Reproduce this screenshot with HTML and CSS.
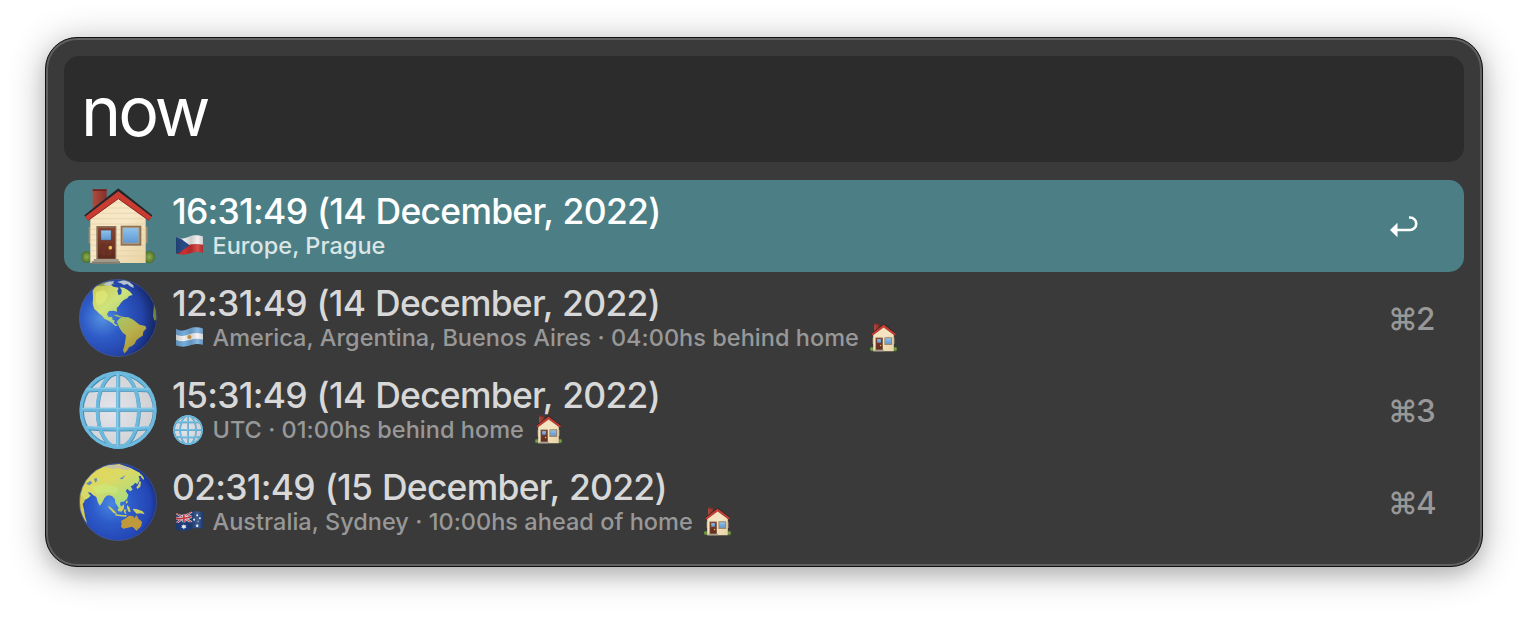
FILE: index.html
```html
<!DOCTYPE html>
<html lang="en">
<head>
<meta charset="utf-8">
<title>now</title>
<link rel="stylesheet" href="styles.css">
</head>
<body>
<svg class="defs" width="0" height="0" aria-hidden="true">
  <defs>
    <linearGradient id="wall" x1="0" y1="0" x2="1" y2="1"><stop offset="0" stop-color="#f6e4bd"/><stop offset=".5" stop-color="#f7e8c8"/><stop offset="1" stop-color="#ead3a4"/></linearGradient>
    <linearGradient id="glass" x1="0" y1="0" x2="0" y2="1"><stop offset="0" stop-color="#8fc4ee"/><stop offset="1" stop-color="#5f97d2"/></linearGradient>
    <linearGradient id="door" x1="0" y1="0" x2="0" y2="1"><stop offset="0" stop-color="#874532"/><stop offset="1" stop-color="#5d2a1e"/></linearGradient>
    <linearGradient id="brick" x1="0" y1="0" x2="1" y2="0"><stop offset="0" stop-color="#b04a3d"/><stop offset="1" stop-color="#84302b"/></linearGradient>
    <radialGradient id="bush"><stop offset="0" stop-color="#8fae4e"/><stop offset="1" stop-color="#4c6e2d"/></radialGradient>
    <radialGradient id="sea" cx=".3" cy=".5" r=".72"><stop offset="0" stop-color="#5590e0"/><stop offset=".35" stop-color="#2f5cc8"/><stop offset=".72" stop-color="#2343a8"/><stop offset="1" stop-color="#111f55"/></radialGradient>
    <radialGradient id="sea2" cx=".42" cy=".52" r=".64"><stop offset="0" stop-color="#4a86e2"/><stop offset=".4" stop-color="#2d5bc9"/><stop offset=".78" stop-color="#2345b4"/><stop offset="1" stop-color="#12235f"/></radialGradient>
    <linearGradient id="land" x1="0" y1="0" x2=".8" y2="1"><stop offset="0" stop-color="#c9c450"/><stop offset=".5" stop-color="#cfe37c"/><stop offset="1" stop-color="#a3c674"/></linearGradient>
    <linearGradient id="south" x1="0" y1="0" x2=".6" y2="1"><stop offset="0" stop-color="#a4c869"/><stop offset=".5" stop-color="#b9b04e"/><stop offset="1" stop-color="#aa9236"/></linearGradient>
    <linearGradient id="asia" x1="0" y1="0" x2=".7" y2="1"><stop offset="0" stop-color="#e8d552"/><stop offset=".5" stop-color="#d9da66"/><stop offset="1" stop-color="#9fdc86"/></linearGradient>
    <radialGradient id="pale" cx=".42" cy=".5" r=".6"><stop offset="0" stop-color="#e2e5ec"/><stop offset="1" stop-color="#cfcfd2"/></radialGradient>
    <linearGradient id="ripple" x1="0" y1="0" x2="1" y2="0"><stop offset="0" stop-color="#000" stop-opacity=".18"/><stop offset=".3" stop-color="#000" stop-opacity="0"/><stop offset=".55" stop-color="#000" stop-opacity=".14"/><stop offset=".8" stop-color="#fff" stop-opacity=".15"/><stop offset="1" stop-color="#000" stop-opacity=".14"/></linearGradient>
    <clipPath id="disc"><circle cx="174" cy="138" r="116"/></clipPath>
    <clipPath id="wave"><path d="M0 5C13 13 23 11 38 5C53-1 66 0 79 4V52C65 48 55 49 40 54C25 59 13 58 0 53Z"/></clipPath>

    <symbol id="house" viewBox="57 36 234 234">
      <path d="M98 43h42v38l-42 34z" fill="url(#brick)"/><path d="M98 43h42v5H98z" fill="#6f211f"/>
      <ellipse cx="80" cy="246" rx="17" ry="18" fill="url(#bush)"/><ellipse cx="268" cy="246" rx="17" ry="19" fill="url(#bush)"/>
      <path d="M86 155h8v50h-8zM255 155h8v50h-8z" fill="#a08a70"/>
      <path d="M91 126 175 62 257 126V264H91Z" fill="url(#wall)"/>
      <path d="M148 83h52M126 99h98M105 115h138M91 131h166M91 147h166M91 163h166M91 179h166M91 195h166M91 211h166M91 227h166M91 243h166" stroke="#e2cfa4" stroke-width="2"/>
      <path d="M73 121 175 40 277 121 268 136 175 64 83 136Z" fill="#232628"/>
      <path d="M75 125 175 49 275 125 267 137 175 71 84 137Z" fill="#c83c32"/>
      <path d="M86 135 175 71 265 135" fill="none" stroke="#8f2825" stroke-width="3"/>
      <path d="M109 153h60v100h-60z" fill="#8a7158"/><path d="M114 158h51v93h-51z" fill="url(#door)"/>
      <path d="M122 165h32v31h-32z" fill="url(#glass)" stroke="#623024" stroke-width="2"/>
      <path d="M124 205h12v35h-12zM143 205h12v35h-12z" fill="#6b3225"/><circle cx="151" cy="218" r="5.500" fill="#edc253"/>
      <path d="M101 252h75v7h-75z" fill="#a39b89"/><path d="M95 259h85v8H95z" fill="#837e73"/>
      <path d="M182 152h62v60h-62z" fill="#8c7358"/><path d="M188 158h49v47h-49z" fill="url(#glass)" stroke="#b39a77" stroke-width="3"/>
    </symbol>

    <symbol id="americas" viewBox="57 21 234 234">
      <circle cx="174" cy="138" r="117" fill="url(#sea)"/>
      <g clip-path="url(#disc)">
        <path d="M98 57 106 43 119 36 137 34 151 37 160 44 176 47 172 58 176 70 184 66 185 54 179 46 191 47 202 53 211 60 218 69 207 72 202 79 191 84 183 92 177 101 170 109 171 119 161 116 147 117 141 126 145 135 153 134 158 139 157 144 164 145 162 153 170 158 174 161 166 162 155 152 143 145 133 140 127 132 119 126 110 117 103 111 98 96 99 78Z" fill="url(#land)"/>
        <path d="M104 43c14-9 27-13 46-15l14 8-18 3-22 3z" fill="#8c9b52"/>
        <path d="M129 38 144 30 163 27 158 34 149 42zM171 30 192 24 207 29 220 40 221 48 210 43 202 36 191 39 183 34z" fill="#b6c2cd"/>
        <path d="m160 128 13 0 8 5 10 1-3 4-11-2-12-4z" fill="#9dbb64"/>
        <path d="m170 149 9-10 10-4 16 1 15 7 9 8 10 7 17 4 3 7-9 10-2 12-11 7-8 7-5 10-7 6-10 5-5 9-5 6-4 3-4-9 4-13 3-17 2-15-11-9-8-12z" fill="url(#south)"/>
        <path d="m282 96 6 4 2 42-7 4-4-14z" fill="#77843c"/>
        <path d="m108 60 24-6 12 14-10 22-20 12-8-18z" fill="#e7ef7b" opacity=".55"/>
      </g>
      <circle cx="174" cy="138" r="115.500" fill="none" stroke="#525a73" stroke-width="3" opacity=".65"/>
    </symbol>

    <symbol id="eastern" viewBox="57 21 234 234">
      <circle cx="174" cy="138" r="117" fill="url(#sea2)"/>
      <g clip-path="url(#disc)">
        <path d="M55 108 75 73 102 45 140 28 178 24 213 37 239 50 246 61 236 60 239 71 232 85 226 80 219 88 212 91 218 101 210 106 202 98 197 105 205 117 201 129 191 137 182 137 180 145 184 154 178 158 171 148 166 140 165 130 157 121 149 118 140 119 133 127 126 141 119 149 113 137 109 123 99 117 92 110 83 109 92 119 85 126 73 133 65 126Z" fill="url(#asia)"/>
        <path d="m57 110 14 14 3 12-6 8 4 17 3 20 6 20-7-8-14-29z" fill="#d8ca55"/>
        <path d="m78 83 13-9 6 7-9 7zM102 69l7-4 3 8-6 7zM178 68l19-11-10 13z" fill="#668fbc"/>
        <path d="M125 34c25-12 68-7 92 5l-18 4-22-6-20 2-18-5z" fill="#c6c2a3"/>
        <path d="m229 94 6-8 3-10 5 1-2 15-9 7zM244 54l8 12-2 6-7-9zM197 137l5-5 1 8-5 3zM201 147l7 7 4 13-6 1-5-12zM145 149l10 7 12 12 4 7-11-5-14-15zM173 159l12-9 8-5-2 14-7 8-10-2zM193 160l8 2-5 3 3 9-4-1-4-8zM164 174l20 3 18 1-5 4-29-3zM218 158l14 2 16 6 6 9-12-3-12 1-8-8z" fill="#c9cf61"/>
        <path d="m183 195 14-8 10-8 12 1 4 7 6-10 7 12 10 8-2 12-7 9-12 1-8-7-14 3-12 3-8-5 2-10z" fill="#c09a3a"/>
        <path d="m224 219 10 0-4 5z" fill="#c4a448"/>
        <path d="m95 93 40-10 40 12-4 18-32-3-27 4z" fill="#c9f082" opacity=".45"/>
      </g>
      <circle cx="174" cy="138" r="115.500" fill="none" stroke="#525a73" stroke-width="3" opacity=".65"/>
    </symbol>

    <symbol id="meridians" viewBox="57 21 234 234">
      <circle cx="174" cy="138" r="114" fill="url(#pale)"/>
      <g fill="none" stroke="#408fb7" stroke-width="11" transform="translate(1 2)">
        <circle cx="174" cy="137" r="109"/><path d="M174 25V251M61 136H287M78 78Q174 72 270 78M78 191Q174 199 270 191"/>
        <ellipse cx="174" cy="138" rx="62" ry="112"/>
      </g>
      <g fill="none" stroke="#6cb9dd" stroke-width="10">
        <circle cx="174" cy="138" r="111"/><path d="M174 25V251M61 136H287M78 78Q174 72 270 78M78 191Q174 199 270 191"/>
        <ellipse cx="174" cy="138" rx="62" ry="112"/>
      </g>
      <path d="M65 133H283M80 75Q174 69 268 75M80 188Q174 196 268 188M172 28V247" fill="none" stroke="#9fd7ee" stroke-width="2"/>
    </symbol>

    <symbol id="czech" viewBox="0 0 79 58"><g clip-path="url(#wave)"><path fill="#eee" d="M0 0h79v30H0z"/><path fill="#cc302f" d="M0 31C22 38 43 20 79 28V58H0Z"/><path fill="#284d89" d="M0 0 40 30 0 58Z"/><path fill="url(#ripple)" d="M0 0h79v58H0z"/></g></symbol>
    <symbol id="argentina" viewBox="0 0 79 58"><g clip-path="url(#wave)"><path fill="#75addd" d="M0 0h79v58H0z"/><path fill="#f2f2f2" d="M0 22C14 29 25 26 39 21S66 17 79 20V36C65 33 54 34 40 38S13 43 0 38Z"/><circle cx="39" cy="29" r="6" fill="#d69a46"/><path fill="url(#ripple)" d="M0 0h79v58H0z"/></g></symbol>
    <symbol id="australia" viewBox="0 0 79 58"><g clip-path="url(#wave)"><path fill="#20427f" d="M0 0h79v58H0z"/><path d="m0 6 46 27M0 36 46 1" stroke="#e7e7ec" stroke-width="7"/><path d="m0 6 46 27M0 36 46 1" stroke="#c94049" stroke-width="3"/><path d="M23 3v30M0 21Q22 24 46 16" fill="none" stroke="#e7e7ec" stroke-width="9"/><path d="M23 3v30M0 21Q22 24 46 16" fill="none" stroke="#ce3540" stroke-width="5"/><path d="M0 34Q22 38 46 32V60H0Z" fill="#20427f"/><g fill="#f0f0f3"><path d="m23 38 2 4 5-1-2 4 3 4-5 0-3 4-3-4-5 0 3-4-2-4 5 1z"/><circle cx="62" cy="12" r="3"/><circle cx="53" cy="25" r="3"/><circle cx="70" cy="21" r="3"/><circle cx="65" cy="30" r="1.500"/><circle cx="62" cy="43" r="3.500"/></g><path fill="url(#ripple)" d="M0 0h79v58H0z"/></g></symbol>
  </defs>
</svg>

<main class="window">
  <div class="search">now</div>
  <ul class="results">
    <li class="row selected">
      <svg class="icon"><use href="#house"/></svg>
      <div class="text">
        <div class="title">16:31:49 (14 December, 2022)</div>
        <div class="subtitle"><svg class="flag"><use href="#czech"/></svg><span class="place">Europe, Prague</span></div>
      </div>
      <svg class="return" viewBox="0 0 28 22"><path d="M19 1.500h1a6.250 6.250 0 0 1 0 12.500H6" fill="none" stroke="#fff" stroke-width="2.600"/><path d="M0 14 7.500 6.800V21.200Z" fill="#fff"/></svg>
    </li>
    <li class="row">
      <svg class="icon"><use href="#americas"/></svg>
      <div class="text">
        <div class="title">12:31:49 (14 December, 2022)</div>
        <div class="subtitle"><svg class="flag"><use href="#argentina"/></svg><span class="place">America, Argentina, Buenos Aires · 04:00hs behind home</span><svg class="home"><use href="#house"/></svg></div>
      </div>
      <div class="shortcut"><span class="cmd">⌘</span><span>2</span></div>
    </li>
    <li class="row">
      <svg class="icon"><use href="#meridians"/></svg>
      <div class="text">
        <div class="title">15:31:49 (14 December, 2022)</div>
        <div class="subtitle"><svg class="mini-globe"><use href="#meridians"/></svg><span class="place">UTC · 01:00hs behind home</span><svg class="home"><use href="#house"/></svg></div>
      </div>
      <div class="shortcut"><span class="cmd">⌘</span><span>3</span></div>
    </li>
    <li class="row">
      <svg class="icon"><use href="#eastern"/></svg>
      <div class="text">
        <div class="title">02:31:49 (15 December, 2022)</div>
        <div class="subtitle"><svg class="flag"><use href="#australia"/></svg><span class="place">Australia, Sydney · 10:00hs ahead of home</span><svg class="home"><use href="#house"/></svg></div>
      </div>
      <div class="shortcut"><span class="cmd">⌘</span><span>4</span></div>
    </li>
  </ul>
</main>
</body>
</html>
```

FILE: styles.css
```css
* { box-sizing: border-box; }
body {
  margin: 0;
  padding: 37px 45px 53px;
  height: 620px;
  overflow: hidden;
  background: #fff;
  font-family: Inter, "Liberation Sans", sans-serif;
}
.defs { display: block; }
.window {
  height: 530px;
  padding: 18px;
  border: 1px solid #111;
  border-radius: 32px;
  background: #3a3a3a;
  box-shadow: inset 0 0 0 2px #606060, 0 5px 36px rgba(0, 0, 0, .3), 0 8px 16px rgba(0, 0, 0, .1);
}
.search {
  height: 106px;
  padding-left: 17px;
  border-radius: 15px;
  background: #2c2c2c;
  color: #fff;
  font-size: 68px;
  font-weight: 400;
  line-height: 110px;
  letter-spacing: -3px;
}
.results { margin: 18px 0 0; padding: 0; list-style: none; }
.row {
  display: flex;
  height: 92px;
  padding: 7px 28px 7px 15px;
  border-radius: 15px;
  color: #d8d8d8;
}
.icon { flex: none; width: 78px; height: 78px; }
.text { flex: 1; margin-left: 15px; white-space: nowrap; }
.title {
  height: 45px;
  line-height: 49px;
  font-size: 35.5px;
  font-weight: 500;
  letter-spacing: -.75px;
  word-spacing: 1px;
}
.subtitle {
  display: flex;
  align-items: center;
  height: 28px;
  font-size: 23.5px;
  font-weight: 500;
  line-height: 28px;
  letter-spacing: .03px;
  color: #989898;
}
.flag { flex: none; width: 27px; height: 20px; margin: -2px 9.500px 0 4px; }
.mini-globe { flex: none; width: 30px; height: 30px; margin: -1px 9.500px 0 1px; }
.home { flex: none; width: 29px; height: 29px; margin: -2px 0 0 10px; }
.selected { background: #4b7f85; color: #fff; }
.selected .subtitle { color: #dbe5e6; }
.return { width: 28px; height: 22px; margin: 29px 18px 0 0; }
.shortcut {
  display: flex;
  width: 48px;
  height: 78px;
  font-size: 31.5px;
  font-weight: 500;
  line-height: 80px;
  color: #989898;
}
.cmd { width: 28px; font-size: 30px; }
```
